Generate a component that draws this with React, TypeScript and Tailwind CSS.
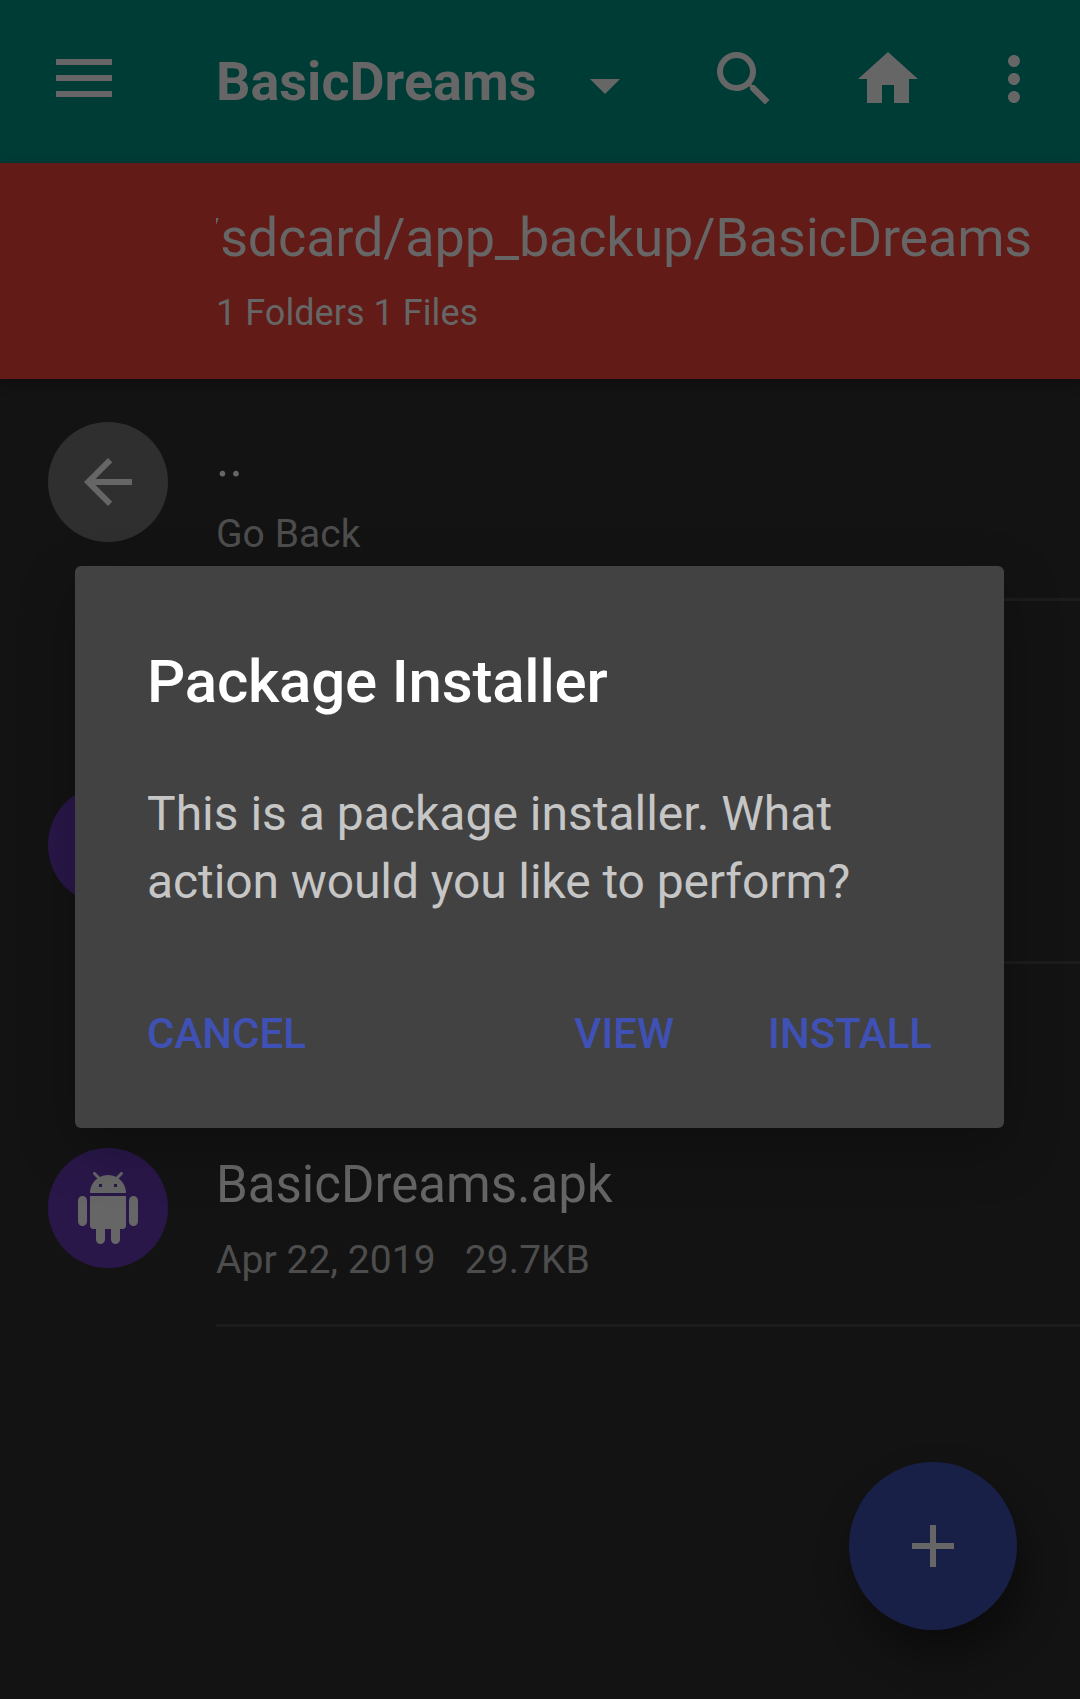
import React from "react";

function Icon({ d, className }: { d: string; className: string }) {
  return (
    <svg viewBox="0 0 24 24" fill="currentColor" className={className} aria-hidden="true">
      <path d={d} />
    </svg>
  );
}

const SEARCH =
  "M15.5 14h-.79l-.28-.27A6.471 6.471 0 0 0 16 9.5 6.5 6.5 0 1 0 9.5 16c1.61 0 3.09-.59 4.23-1.57l.27.28v.79l5 4.99L20.49 19l-4.99-5zm-6 0C7.01 14 5 11.99 5 9.5S7.01 5 9.5 5 14 7.01 14 9.5 11.99 14 9.5 14z";
const HOME = "M10 20v-6h4v6h5v-8h3L12 3 2 12h3v8z";
const MORE =
  "M12 8c1.1 0 2-.9 2-2s-.9-2-2-2-2 .9-2 2 .9 2 2 2zm0 2c-1.1 0-2 .9-2 2s.9 2 2 2 2-.9 2-2-.9-2-2-2zm0 6c-1.1 0-2 .9-2 2s.9 2 2 2 2-.9 2-2-.9-2-2-2z";
const BACK = "M20 11H7.83l5.59-5.59L12 4l-8 8 8 8 1.41-1.41L7.83 13H20v-2z";
const ANDROID =
  "M6 18c0 .55.45 1 1 1h1v3.5c0 .83.67 1.5 1.5 1.5s1.5-.67 1.5-1.5V19h2v3.5c0 .83.67 1.5 1.5 1.5s1.5-.67 1.5-1.5V19h1c.55 0 1-.45 1-1V8H6v10zM3.500 8C2.670 8 2 8.670 2 9.500v7c0 .83.67 1.5 1.5 1.5S5 17.330 5 16.500v-7C5 8.670 4.330 8 3.500 8zm17 0c-.83 0-1.500.67-1.500 1.500v7c0 .83.67 1.500 1.500 1.500s1.500-.67 1.500-1.500v-7c0-.83-.67-1.500-1.500-1.500zm-4.970-5.840l1.300-1.300c.2-.2.2-.51 0-.71-.2-.2-.51-.2-.71 0l-1.480 1.480C13.850 1.230 12.950 1 12 1c-.96 0-1.860.23-2.660.63L7.850.15c-.2-.2-.51-.2-.71 0-.2.2-.2.51 0 .71l1.310 1.310C6.970 3.260 6 5.010 6 7h12c0-1.990-.97-3.750-2.470-4.840zM10 5H9V4h1v1zm5 0h-1V4h1v1z";

function Avatar({ icon, className }: { icon: string; className: string }) {
  return (
    <div className={`ml-12 flex size-[120px] shrink-0 items-center justify-center rounded-full ${className}`}>
      <Icon d={icon} className="size-[72px] text-[#666666]" />
    </div>
  );
}

function Row({
  icon,
  color,
  name,
  detail,
  className,
}: {
  icon: string;
  color: string;
  name: string;
  detail: string;
  className: string;
}) {
  return (
    <li className={`flex items-end ${className}`}>
      <div className="flex h-[179px] w-[216px] shrink-0">
        <Avatar icon={icon} className={color} />
      </div>
      <div className="flex h-[179px] flex-1 flex-col whitespace-pre border-b-[3px] border-[#1c1c1c]">
        <span className="mt-[7px] h-[60px] text-[51px] leading-[60px] text-[#666666]">{name}</span>
        <span className="mt-[22px] h-[46px] text-[39px] leading-[46px] tracking-[0.05px] text-[#4d4d4d]">{detail}</span>
      </div>
    </li>
  );
}

export default function App() {
  return (
    <div className="relative h-[1699px] w-[1080px] overflow-hidden bg-[#131313] font-['Roboto',sans-serif]">
      <header className="flex h-[163px] bg-[#003c36] text-[#666666]">
        <button aria-label="Menu" className="ml-14 mt-[59px] flex h-[38px] w-14 flex-col justify-between">
          <span className="h-1.5 w-full bg-[#666666]" />
          <span className="h-1.5 w-full bg-[#666666]" />
          <span className="h-1.5 w-full bg-[#666666]" />
        </button>
        <h1 className="ml-[104px] mt-[50px] w-[353px] text-[54px] leading-[64px] font-bold">BasicDreams</h1>
        <Icon d="M7 10l5 5 5-5z" className="mt-[49px] size-[72px] shrink-0" />
        <Icon d={SEARCH} className="ml-[67px] mt-[43px] size-[72px] shrink-0" />
        <Icon d={HOME} className="ml-[72px] mt-[43px] size-[72px] shrink-0" />
        <Icon d={MORE} className="ml-[54px] mt-[43px] size-[72px] shrink-0" />
      </header>

      <section className="relative h-[216px] bg-[#621b16] pl-[216px] pr-12 text-[#666666] shadow-[0_4px_12px_rgba(0,0,0,0.35)]">
        <div className="flex h-[118px] justify-end overflow-hidden pt-[43px]">
          <span className="shrink-0 text-[54px] leading-[64px] tracking-[-0.19px]">/sdcard/app_backup/BasicDreams</span>
        </div>
        <div className="mt-[11px] text-[36px] leading-[42px] tracking-[0.05px]">1 Folders 1 Files</div>
      </section>

      <ul>
        <Row icon={BACK} color="bg-[#2f2f2f]" name=".." detail="Go Back" className="h-[222px]" />
        <Row icon={ANDROID} color="bg-[#291749]" name="" detail="" className="h-[363px]" />
        <Row
          icon={ANDROID}
          color="bg-[#291749]"
          name="BasicDreams.apk"
          detail="Apr 22, 2019   29.7KB"
          className="h-[363px]"
        />
      </ul>

      <button
        aria-label="Add"
        className="absolute right-[63px] bottom-[69px] flex size-[168px] items-center justify-center rounded-full bg-[#192048] shadow-[8px_24px_40px_rgba(0,0,0,0.4)]"
      >
        <Icon d="M19 13h-6v6h-2v-6H5v-2h6V5h2v6h6z" className="size-[72px] text-[#666666]" />
      </button>

      <div
        role="dialog"
        className="absolute top-[566px] left-[75px] flex h-[562px] w-[929px] flex-col rounded-md bg-[#424242] px-[72px] shadow-[0_20px_56px_rgba(0,0,0,0.25)]"
      >
        <h2 className="mt-[81px] text-[60px] leading-[70px] font-medium tracking-[-0.2px] text-white">
          Package Installer
        </h2>
        <p className="mt-[63px] text-[48px] leading-[68px] text-[#c6c6c6]">
          <span className="block">This is a package installer. What</span>
          <span className="block tracking-[-0.1px]">action would you like to perform?</span>
        </p>
        <div className="mt-[93px] flex text-[42px] leading-[50px] font-medium text-[#3f51b5]">
          <button>CANCEL</button>
          <button className="ml-auto">VIEW</button>
          <button className="ml-[94px]">INSTALL</button>
        </div>
      </div>
    </div>
  );
}
